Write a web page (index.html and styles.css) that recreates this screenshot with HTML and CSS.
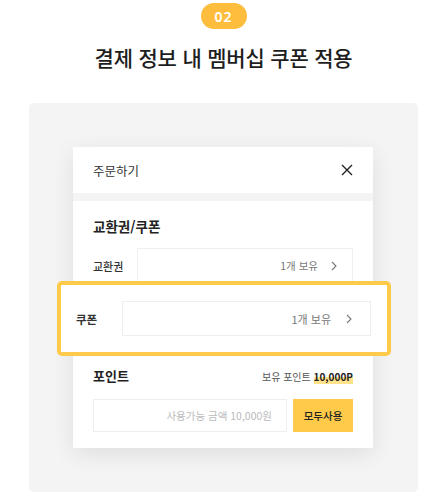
FILE: index.html
```html
<!DOCTYPE html>
<html lang="ko">
<head>
<meta charset="utf-8">
<link rel="stylesheet" href="styles.css">
</head>
<body>
<div class="page">
  <div class="step">
    <span class="badge">02</span>
    <h1 class="title">결제 정보 내 멤버십 쿠폰 적용</h1>
  </div>
  <div class="stage">
    <div class="card">
      <div class="card-head">
        <span class="card-title">주문하기</span>
        <svg class="close" width="12" height="12" viewBox="0 0 12 12"><path d="M1 1L11 11M11 1L1 11" stroke="#222" stroke-width="1.4" fill="none"/></svg>
      </div>
      <div class="band"></div>
      <div class="section sec-coupon">
        <div class="sec-title">교환권/쿠폰</div>
        <div class="row">
          <span class="row-label">교환권</span>
          <div class="row-box"><span>1개 보유</span><svg class="chev" width="6" height="10" viewBox="0 0 6 10"><path d="M1 1L5 5L1 9" stroke="#777" stroke-width="1.1" fill="none"/></svg></div>
        </div>
        <div class="row row-under">
          <span class="row-label"></span>
          <div class="row-box"></div>
        </div>
      </div>
      <div class="section sec-point">
        <div class="point-head">
          <span class="sec-title">포인트</span>
          <span class="own">보유 포인트 <b class="mark">10,000P</b></span>
        </div>
        <div class="point-row">
          <div class="input">사용가능 금액 10,000원</div>
          <button class="use-all">모두사용</button>
        </div>
      </div>
      <div class="focus">
        <span class="focus-label">쿠폰</span>
        <div class="focus-box"><span>1개 보유</span><svg class="chev" width="6" height="10" viewBox="0 0 6 10"><path d="M1 1L5 5L1 9" stroke="#777" stroke-width="1.1" fill="none"/></svg></div>
      </div>
    </div>
  </div>
</div>
</body>
</html>
```

FILE: styles.css
```css
* { box-sizing: border-box; }
html, body { margin: 0; padding: 0; background: #fff; }
body {
  font-family: "Noto Sans CJK KR", "Noto Sans", sans-serif;
  color: #222;
  width: 442px;
}
.page { padding: 3px 24px 0 29px; }
.step { display: flex; flex-direction: column; align-items: center; }
.badge {
  display: flex; align-items: center; justify-content: center;
  width: 46px; height: 26px; border-radius: 13px;
  background: #ffbd3e; color: #fff;
  font-size: 14px; font-weight: 600; letter-spacing: 1px;
  font-family: "Noto Sans", "Noto Sans CJK KR", sans-serif;
}
.title {
  margin: 13px 0 0; font-size: 21px; font-weight: 500; line-height: 30px;
  color: #1e1e1e; letter-spacing: -0.2px;
}
.stage {
  margin-top: 31px;
  background: #f4f4f4; border-radius: 5px;
  padding: 44px 44px 44px;
  height: 389px;
}
.card {
  position: relative;
  width: 300px; background: #fff;
  box-shadow: 0 6px 22px rgba(0,0,0,0.09);
}
.card-head {
  height: 46px; display: flex; align-items: center; justify-content: space-between;
  padding: 0 20px;
}
.card-title { font-size: 12.5px; color: #333; }
.band { height: 8px; background: #f4f4f4; }
.section { padding: 0 20px; }
.sec-coupon { padding-top: 16px; padding-bottom: 20px; }
.sec-title { font-size: 13.5px; font-weight: 700; line-height: 18px; color: #222; }
.sec-coupon .sec-title { margin-bottom: 13px; }
.row { display: flex; align-items: center; height: 35px; }
.row + .row { margin-top: 7px; }
.row-label { width: 44px; font-size: 11px; font-weight: 500; color: #333; }
.row-box {
  flex: 1; height: 35px; border: 1px solid #efefef;
  display: flex; align-items: center; justify-content: flex-end;
  padding-right: 15px; font-size: 10.5px; color: #777; gap: 13px;
}
.sec-point { padding-top: 22px; padding-bottom: 16px; }
.point-head { display: flex; justify-content: space-between; align-items: center; height: 18px; }
.point-head .sec-title { font-size: 13px; }
.own { font-size: 10px; color: #555; }
.mark {
  font-weight: 700; color: #222;
  background: linear-gradient(transparent 55%, #ffe28a 55%);
}
.point-row { display: flex; gap: 6px; margin-top: 14px; height: 33px; }
.input {
  flex: 1; border: 1px solid #eee; display: flex; align-items: center; justify-content: flex-end;
  padding-right: 14px; font-size: 10.5px; color: #bbb;
}
.use-all {
  width: 60px; border: 0; background: #ffc94a; color: #222;
  font-family: inherit; font-size: 10.5px; font-weight: 500; padding: 0;
}
.focus {
  position: absolute; left: -16px; top: 134px;
  width: 334px; height: 75px;
  border: 4px solid #ffc94a; border-radius: 5px; background: #fff;
  display: flex; align-items: center; padding: 0 16px 0 15px;
}
.focus-label { width: 46px; font-size: 11.5px; font-weight: 700; color: #333; }
.focus-box {
  flex: 1; height: 35px; border: 1px solid #eee;
  display: flex; align-items: center; justify-content: flex-end;
  padding-right: 18px; font-size: 11px; color: #777; gap: 15px;
}
```
